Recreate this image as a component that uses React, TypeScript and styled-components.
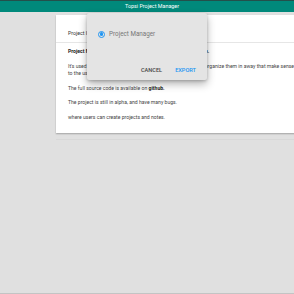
import React from "react";
import styled, { createGlobalStyle } from "styled-components";

const Global = createGlobalStyle`
  html, body { margin: 0; padding: 0; }
  body {
    background: #e0e0e0;
    font-family: Roboto, "Liberation Sans", Arial, sans-serif;
    overflow: hidden;
  }
`;

const Page = styled.div`
  position: relative;
  height: 294px;
  display: flex;
  flex-direction: column;
  overflow: hidden;
`;

const Header = styled.header`
  height: 11px;
  border-top: 1px solid #23504b;
  background: #00897b;
  color: #ffffff;
  font-size: 5.4px;
  line-height: 11px;
  text-align: center;
  padding-left: 10px;
  flex: none;
`;

const Main = styled.main`
  padding: 3px 0 0 56px;
  flex: 1;
  display: flex;
  flex-direction: column;
`;

const Card = styled.section`
  background: #ffffff;
  width: 420px;
  flex: none;
  box-shadow: 0 1px 1.5px rgba(0, 0, 0, 0.28);
`;

const TabBar = styled.div`
  padding: 15px 12px 6px;
  font-size: 5.2px;
  line-height: 6px;
  color: #333;
  border-bottom: 1px solid #e6e6e6;
`;

const Body = styled.div`
  padding: 5px 12px 12px;
  font-size: 5.1px;
  line-height: 7.5px;
  color: #444;
`;

const Para = styled.p<{ $bold?: boolean }>`
  margin: 0 0 7px;
  white-space: nowrap;
  font-weight: ${(p) => (p.$bold ? 700 : 400)};
  color: ${(p) => (p.$bold ? "#222" : "#444")};
  &:last-child { margin-bottom: 0; }
  strong { color: #222; }
`;

const Ghost = styled.div`
  margin-top: 6px;
  height: 1px;
  background: #d8d8d8;
`;

const Footer = styled.footer`
  margin-top: auto;
  height: 1px;
  background: #c4c4c4;
  flex: none;
`;

const Dialog = styled.div`
  position: absolute;
  left: 87px;
  top: 13px;
  width: 120px;
  height: 67px;
  box-sizing: border-box;
  background: #e4e4e4;
  border-radius: 2px;
  box-shadow: 0 4px 8px rgba(0, 0, 0, 0.3), 0 1px 3px rgba(0, 0, 0, 0.2);
  padding: 17px 11px 6px 11px;
  display: flex;
  flex-direction: column;
`;

const Option = styled.label`
  display: flex;
  align-items: center;
  gap: 4px;
  font-size: 6.3px;
  line-height: 8px;
  color: #777;
`;

const Radio = styled.span`
  width: 7px;
  height: 7px;
  box-sizing: border-box;
  border-radius: 50%;
  border: 1px solid #2196f3;
  display: flex;
  align-items: center;
  justify-content: center;
  &::after {
    content: "";
    width: 3.4px;
    height: 3.4px;
    border-radius: 50%;
    background: #2196f3;
  }
`;

const Actions = styled.div`
  margin-top: auto;
  display: flex;
  justify-content: flex-end;
  gap: 13px;
`;

const Btn = styled.button<{ $primary?: boolean }>`
  border: 0;
  background: none;
  padding: 0;
  font-family: inherit;
  font-weight: 500;
  font-size: 5.6px;
  line-height: 8px;
  text-transform: uppercase;
  color: ${(p) => (p.$primary ? "#2196f3" : "#444")};
`;

export default function App() {
  return (
    <>
      <Global />
      <Page>
        <Header>Topsi Project Manager</Header>
        <Main>
          <Card>
            <TabBar>Project Info</TabBar>
            <Body>
              <Para $bold>Project Manager is a simple, tiny projects and notes software.</Para>
              <Para>
                It's used to manage all your projects and notes easily, and to organize them in away that make sense
                <br />
                to the user.
              </Para>
              <Para>
                The full source code is available on <strong>github.</strong>
              </Para>
              <Para>The project is still in alpha, and have many bugs.</Para>
              <Para>where users can create projects and notes.</Para>
            </Body>
          </Card>
          <Ghost />
        </Main>
        <Footer />
        <Dialog role="dialog">
          <Option>
            <Radio />
            Project Manager
          </Option>
          <Actions>
            <Btn>Cancel</Btn>
            <Btn $primary>Export</Btn>
          </Actions>
        </Dialog>
      </Page>
    </>
  );
}
